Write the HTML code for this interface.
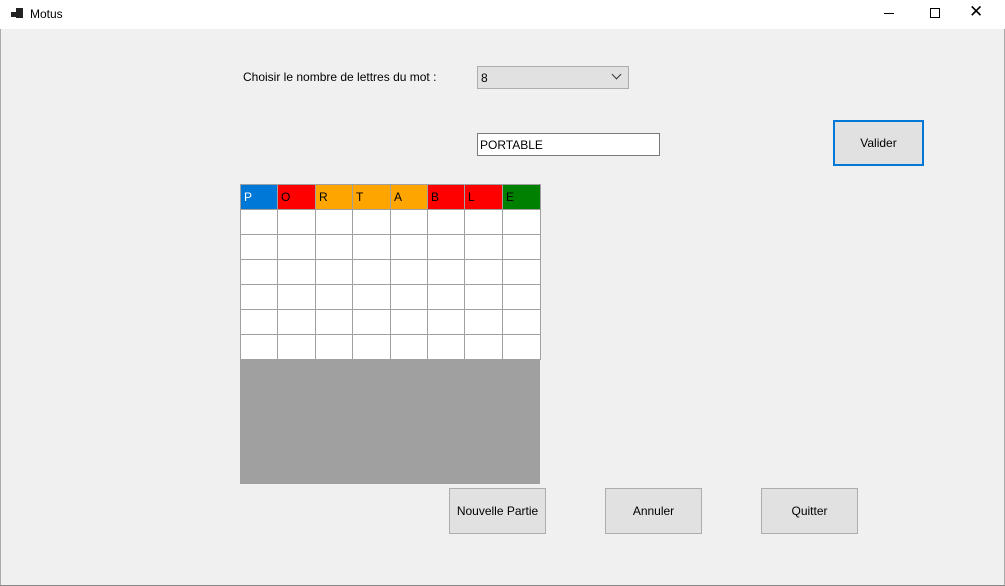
<!DOCTYPE html>
<html><head><style>
body{margin:0;width:1005px;height:586px;background:#f0f0f0;font-family:"Liberation Sans",sans-serif;font-size:12px;position:relative;overflow:hidden}
.a{position:absolute}
.title{left:0;top:0;width:1005px;height:29px;background:#fff}
.btn{position:absolute;background:#e1e1e1;border:1px solid #adadad;box-sizing:border-box;display:flex;align-items:center;justify-content:center;font-size:12px}
td{border:1px solid #a0a0a0;padding:0 0 0 3px;height:25px;background:#fff;font-size:12px;vertical-align:middle;box-sizing:border-box}
table{border-collapse:collapse;table-layout:fixed;width:300px}
</style></head><body>
<div class="a title"></div>
<div class="a" style="left:11px;top:12px;width:5px;height:5px;background:#222"></div>
<div class="a" style="left:16px;top:8px;width:7px;height:10px;background:#222"></div>
<div class="a" style="left:30px;top:7px;font-size:12px">Motus</div>
<div class="a" style="left:884px;top:13px;width:10px;height:1px;background:#000"></div>
<div class="a" style="left:930px;top:8px;width:8px;height:8px;border:1px solid #000"></div>
<div class="a" style="left:969px;top:2px;font-size:17px">✕</div>
<div class="a" style="left:0;top:29px;width:1px;height:557px;background:#aaa"></div>
<div class="a" style="left:1004px;top:29px;width:1px;height:557px;background:#aaa"></div>
<div class="a" style="left:0;top:585px;width:1005px;height:1px;background:#888"></div>
<div class="a" style="left:243px;top:70px">Choisir le nombre de lettres du mot :</div>
<div class="a" style="left:477px;top:66px;width:152px;height:23px;background:#e1e1e1;border:1px solid #adadad;box-sizing:border-box;padding:4px 3px">8</div>
<div class="a" style="left:613px;top:71px;width:6px;height:6px;border-right:1px solid #333;border-bottom:1px solid #333;transform:rotate(45deg)"></div>
<div class="a" style="left:477px;top:133px;width:183px;height:23px;background:#fff;border:1px solid #7a7a7a;box-sizing:border-box;padding:4px 2px">PORTABLE</div>
<div class="btn" style="left:833px;top:120px;width:91px;height:46px;border:2px solid #0078d7">Valider</div>
<div class="a" style="left:240px;top:359px;width:300px;height:125px;background:#a0a0a0"></div>
<table class="a" style="left:240px;top:184px">
<colgroup><col style="width:37px"><col style="width:38px"><col style="width:37px"><col style="width:38px"><col style="width:37px"><col style="width:37px"><col style="width:38px"><col style="width:38px"></colgroup>
<tr><td style="background:#0078d7;color:#fff">P</td><td style="background:#f00">O</td><td style="background:#ffa500">R</td><td style="background:#ffa500">T</td><td style="background:#ffa500">A</td><td style="background:#f00">B</td><td style="background:#f00">L</td><td style="background:#008000">E</td></tr>
<tr><td></td><td></td><td></td><td></td><td></td><td></td><td></td><td></td></tr>
<tr><td></td><td></td><td></td><td></td><td></td><td></td><td></td><td></td></tr>
<tr><td></td><td></td><td></td><td></td><td></td><td></td><td></td><td></td></tr>
<tr><td></td><td></td><td></td><td></td><td></td><td></td><td></td><td></td></tr>
<tr><td></td><td></td><td></td><td></td><td></td><td></td><td></td><td></td></tr>
<tr><td></td><td></td><td></td><td></td><td></td><td></td><td></td><td></td></tr>
</table>
<div class="btn" style="left:449px;top:488px;width:97px;height:46px">Nouvelle Partie</div>
<div class="btn" style="left:605px;top:488px;width:97px;height:46px">Annuler</div>
<div class="btn" style="left:761px;top:488px;width:97px;height:46px">Quitter</div>
</body></html>
